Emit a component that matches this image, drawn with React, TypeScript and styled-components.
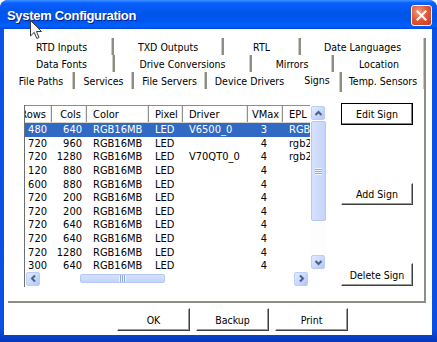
import React from 'react';
import styled, { createGlobalStyle } from 'styled-components';

const GlobalStyle = createGlobalStyle`
  html, body {
    margin: 0;
    padding: 0;
    background: #ffffff;
    overflow: hidden;
  }
  * {
    box-sizing: border-box;
  }
`;

const uiFont = `"DejaVu Sans Condensed", "DejaVu Sans", sans-serif`;

const Window = styled.div`
  position: relative;
  width: 437px;
  height: 342px;
  display: flex;
  flex-direction: column;
  background: linear-gradient(to bottom, #0a52e8 0%, #0a4fe4 96%, #0837b8 100%);
  border-radius: 8px 8px 0 0;
  overflow: hidden;
  font-family: ${uiFont};
  font-size: 10.5px;
  color: #000;
`;

const TitleBar = styled.div`
  height: 29px;
  flex-shrink: 0;
  display: flex;
  align-items: center;
  justify-content: space-between;
  padding: 0 5px 0 7px;
  background: linear-gradient(
    to bottom,
    #3d95ff 0%,
    #0a5fff 10%,
    #0055ea 45%,
    #0057f0 75%,
    #0062ff 90%,
    #0047d8 100%
  );
`;

const Title = styled.span`
  color: #ffffff;
  font-family: "Liberation Sans", Arial, sans-serif;
  font-weight: bold;
  font-size: 13px;
  letter-spacing: -0.3px;
  text-shadow: 1px 1px 0 #0a1d8c;
  margin-top: 2px;
`;

const CloseButton = styled.div`
  width: 21px;
  height: 21px;
  border: 1px solid #ffffff;
  border-radius: 3px;
  background: radial-gradient(circle at 35% 30%, #f39a7f 0%, #e4593a 45%, #c8391b 100%);
  display: flex;
  align-items: center;
  justify-content: center;
  margin-top: 2px;
`;

const Client = styled.div`
  flex: 1;
  margin: 0 5px 7px 4px;
  background: #ffffff;
  display: flex;
  flex-direction: column;
`;

const TabStrip = styled.div`
  padding-top: 9px;
  display: flex;
  flex-direction: column;
`;

const TabRow = styled.div<{ $indent: number }>`
  display: flex;
  height: 17px;
  padding-left: ${p => p.$indent}px;
`;

const Tab = styled.div<{ $w: number; $selected?: boolean; $noEdge?: boolean }>`
  width: ${p => p.$w}px;
  flex-shrink: 0;
  display: flex;
  align-items: center;
  justify-content: center;
  border-right: 2px solid ${p => (p.$noEdge ? 'transparent' : '#8e8e86')};
  box-shadow: ${p => (p.$noEdge ? 'none' : 'inset -1px 0 0 #c9c9c0')};
  white-space: nowrap;
  padding-bottom: ${p => (p.$selected ? '4px' : '0')};
  margin-bottom: ${p => (p.$selected ? '-3px' : '0')};
  position: relative;
  z-index: 1;
`;

const Panel = styled.div`
  margin-left: 4px;
  width: 418px;
  height: 214px;
  border-right: 2px solid #8e8e86;
  border-bottom: 2px solid #8e8e86;
  display: flex;
  padding: 16px 0 0 16px;
  gap: 14px;
`;

const ListView = styled.div`
  width: 303px;
  height: 182px;
  border-left: 1px solid #6f6f6f;
  display: grid;
  grid-template-columns: 285px 17px;
  grid-template-rows: 165px 17px;
  font-size: 11px;
`;

const ListClip = styled.div`
  overflow: hidden;
  border-top: 1px solid #8c8c8c;
`;

const ListInner = styled.div`
  margin-left: -9px;
  width: 330px;
`;

const HeaderRow = styled.div`
  display: flex;
  height: 17px;
  border-bottom: 1px solid #d8d6cc;
`;

const HeaderCell = styled.div<{ $w: number; $align: string }>`
  width: ${p => p.$w}px;
  flex-shrink: 0;
  display: flex;
  align-items: center;
  justify-content: ${p => p.$align};
  padding: 0 5px 0 ${p => (p.$align === 'flex-end' ? 2 : 6)}px;
  border-right: 1px solid #8f8f8f;
  box-shadow: inset -1px 0 0 #e8e8e8;
  white-space: nowrap;
  overflow: hidden;
`;

const DataRow = styled.div<{ $selected?: boolean }>`
  display: flex;
  height: 13.6px;
  background: ${p => (p.$selected ? '#316ac5' : 'transparent')};
  color: ${p => (p.$selected ? '#ffffff' : '#000000')};
`;

const DataCell = styled.div<{ $w: number; $align: string }>`
  width: ${p => p.$w}px;
  flex-shrink: 0;
  display: flex;
  align-items: center;
  justify-content: ${p => p.$align};
  padding: 0 5px 0 ${p => (p.$align === 'flex-end' ? 2 : p.$align === 'center' ? 2 : 6)}px;
  white-space: nowrap;
  overflow: hidden;
  line-height: 13px;
`;

const VScroll = styled.div`
  display: flex;
  flex-direction: column;
  padding: 1px;
  background: #fdfdfd;
`;

const HScroll = styled.div`
  display: flex;
  align-items: center;
  padding: 1px 2px 1px 1px;
`;

const ArrowButton = styled.div`
  width: 14px;
  height: 14px;
  flex-shrink: 0;
  border: 1px solid #b9cdf7;
  border-radius: 2px;
  background: linear-gradient(135deg, #e3ebfe 0%, #c6d6fc 60%, #b3c7f6 100%);
  display: flex;
  align-items: center;
  justify-content: center;
`;

const Track = styled.div<{ $vertical?: boolean }>`
  flex: 1;
  display: flex;
  flex-direction: ${p => (p.$vertical ? 'column' : 'row')};
  align-items: stretch;
  padding: ${p => (p.$vertical ? '1px 0' : '0 1px')};
`;

const Thumb = styled.div<{ $vertical?: boolean }>`
  border: 1px solid #b4c8f6;
  border-radius: 2px;
  background: ${p =>
    p.$vertical
      ? 'linear-gradient(to right, #d6e1fd, #c4d4fb)'
      : 'linear-gradient(to bottom, #d6e1fd, #c4d4fb)'};
  display: flex;
  align-items: center;
  justify-content: center;
`;

const Spacer = styled.div<{ $size: number }>`
  flex: 0 0 ${p => p.$size}px;
`;

const Corner = styled.div``;

const SideButtons = styled.div`
  width: 72px;
  height: 183px;
  margin-top: -2px;
  display: flex;
  flex-direction: column;
  justify-content: space-between;
`;

const Button = styled.div<{ $default?: boolean; $w?: number; $h?: number }>`
  width: ${p => p.$w ?? 72}px;
  height: ${p => p.$h ?? 22}px;
  display: flex;
  align-items: center;
  justify-content: center;
  background: #ffffff;
  border: 1px solid;
  border-color: ${p => (p.$default ? '#000000' : '#ffffff #404040 #404040 #ffffff')};
  box-shadow: ${p =>
    p.$default
      ? 'inset -1px -1px 0 #808080, inset 1px 1px 0 #ffffff'
      : 'inset -1px -1px 0 #9a9a9a'};
  white-space: nowrap;
`;

const BottomBar = styled.div`
  display: flex;
  gap: 6px;
  padding-left: 113px;
  margin-top: 5px;
`;

const Cursor = styled.svg`
  position: absolute;
  left: 30px;
  top: 20px;
`;

const Grip = ({ vertical }: { vertical?: boolean }) =>
  vertical ? (
    <svg width="7" height="7" viewBox="0 0 7 7">
      {[0, 2, 4, 6].map(y => (
        <line key={y} x1="0" y1={y + 0.5} x2="7" y2={y + 0.5} stroke="#eef3ff" />
      ))}
      {[1, 3, 5].map(y => (
        <line key={y} x1="0" y1={y + 0.5} x2="7" y2={y + 0.5} stroke="#8fa8e6" />
      ))}
    </svg>
  ) : (
    <svg width="7" height="7" viewBox="0 0 7 7">
      {[0, 2, 4, 6].map(x => (
        <line key={x} x1={x + 0.5} y1="0" x2={x + 0.5} y2="7" stroke="#eef3ff" />
      ))}
      {[1, 3, 5].map(x => (
        <line key={x} x1={x + 0.5} y1="0" x2={x + 0.5} y2="7" stroke="#8fa8e6" />
      ))}
    </svg>
  );

const Chevron = ({ dir }: { dir: 'up' | 'down' | 'left' | 'right' }) => {
  const pts = {
    up: '1.5,6 4.5,3 7.5,6',
    down: '1.5,3 4.5,6 7.5,3',
    left: '6,1.5 3,4.5 6,7.5',
    right: '3,1.5 6,4.5 3,7.5',
  }[dir];
  return (
    <svg width="9" height="9" viewBox="0 0 9 9">
      <polyline points={pts} fill="none" stroke="#4d6185" strokeWidth="2" />
    </svg>
  );
};

const tabRows = [
  { indent: 7, tabs: [['RTD Inputs', 103], ['TXD Outputs', 110], ['RTL', 77], ['Date Languages', 125]] },
  { indent: 6, tabs: [['Data Fonts', 105], ['Drive Conversions', 137], ['Mirrors', 82], ['Location', 92]] },
  {
    indent: 5,
    tabs: [
      ['File Paths', 66],
      ['Services', 59],
      ['File Servers', 73],
      ['Device Drivers', 87],
      ['Signs', 48],
      ['Temp. Sensors', 84],
    ],
  },
];

const columns = [
  { title: 'Rows', w: 36, align: 'flex-end', head: 'flex-end' },
  { title: 'Cols', w: 35, align: 'flex-end', head: 'flex-end' },
  { title: 'Color', w: 62, align: 'flex-start', head: 'flex-start' },
  { title: 'Pixel', w: 34, align: 'flex-start', head: 'flex-start' },
  { title: 'Driver', w: 65, align: 'flex-start', head: 'flex-start' },
  { title: 'VMax', w: 35, align: 'center', head: 'center' },
  { title: 'EPL', w: 60, align: 'flex-start', head: 'flex-start' },
];

const signs = [
  ['480', '640', 'RGB16MB', 'LED', 'V6500_0', '3', 'RGB16'],
  ['720', '960', 'RGB16MB', 'LED', '', '4', 'rgb2'],
  ['720', '1280', 'RGB16MB', 'LED', 'V70QT0_0', '4', 'rgb2'],
  ['120', '880', 'RGB16MB', 'LED', '', '4', ''],
  ['600', '880', 'RGB16MB', 'LED', '', '4', ''],
  ['720', '200', 'RGB16MB', 'LED', '', '4', ''],
  ['720', '200', 'RGB16MB', 'LED', '', '4', ''],
  ['720', '640', 'RGB16MB', 'LED', '', '4', ''],
  ['720', '640', 'RGB16MB', 'LED', '', '4', ''],
  ['720', '1280', 'RGB16MB', 'LED', '', '4', ''],
  ['300', '640', 'RGB16MB', 'LED', '', '4', ''],
];

const App: React.FC = () => {
  return (
    <>
      <GlobalStyle />
      <Window>
        <TitleBar>
          <Title>System Configuration</Title>
          <CloseButton>
            <svg width="11" height="11" viewBox="0 0 11 11">
              <path d="M1.5 1.5 L9.5 9.5 M9.5 1.5 L1.5 9.5" stroke="#ffffff" strokeWidth="2.2" strokeLinecap="square" />
            </svg>
          </CloseButton>
        </TitleBar>

        <Client>
          <TabStrip>
            {tabRows.map((row, i) => (
              <TabRow key={i} $indent={row.indent}>
                {row.tabs.map(([label, w]) => (
                  <Tab
                    key={label as string}
                    $w={w as number}
                    $selected={label === 'Signs'}
                    $noEdge={label === 'Device Drivers'}
                  >
                    {label}
                  </Tab>
                ))}
              </TabRow>
            ))}
          </TabStrip>

          <Panel>
            <ListView>
              <ListClip>
                <ListInner>
                  <HeaderRow>
                    {columns.map(c => (
                      <HeaderCell key={c.title} $w={c.w} $align={c.head}>
                        {c.title}
                      </HeaderCell>
                    ))}
                  </HeaderRow>
                  {signs.map((s, i) => (
                    <DataRow key={i} $selected={i === 0}>
                      {columns.map((c, j) => (
                        <DataCell key={c.title} $w={c.w} $align={c.align}>
                          {s[j]}
                        </DataCell>
                      ))}
                    </DataRow>
                  ))}
                </ListInner>
              </ListClip>

              <VScroll>
                <ArrowButton>
                  <Chevron dir="up" />
                </ArrowButton>
                <Track $vertical>
                  <Thumb $vertical style={{ height: 100 }}>
                    <Grip vertical />
                  </Thumb>
                </Track>
                <ArrowButton>
                  <Chevron dir="down" />
                </ArrowButton>
              </VScroll>

              <HScroll>
                <ArrowButton>
                  <Chevron dir="left" />
                </ArrowButton>
                <Track>
                  <Spacer $size={39} />
                  <Thumb style={{ width: 85 }}>
                    <Grip />
                  </Thumb>
                </Track>
                <ArrowButton>
                  <Chevron dir="right" />
                </ArrowButton>
              </HScroll>
              <Corner />
            </ListView>

            <SideButtons>
              <Button $default>Edit Sign</Button>
              <Button>Add Sign</Button>
              <Button $h={23}>Delete Sign</Button>
            </SideButtons>
          </Panel>

          <BottomBar>
            <Button $w={73} $h={23}>OK</Button>
            <Button $w={73} $h={23}>Backup</Button>
            <Button $w={73} $h={23}>Print</Button>
          </BottomBar>
        </Client>

        <Cursor width="13" height="20" viewBox="0 0 13 20">
          <path
            d="M0.5 0.5 L0.5 16 L4.2 12.4 L6.8 18.5 L9 17.5 L6.5 11.5 L11.5 11.5 Z"
            fill="#f4f4f4"
            stroke="#3a3a3a"
            strokeWidth="1"
          />
        </Cursor>
      </Window>
    </>
  );
};

export default App;
